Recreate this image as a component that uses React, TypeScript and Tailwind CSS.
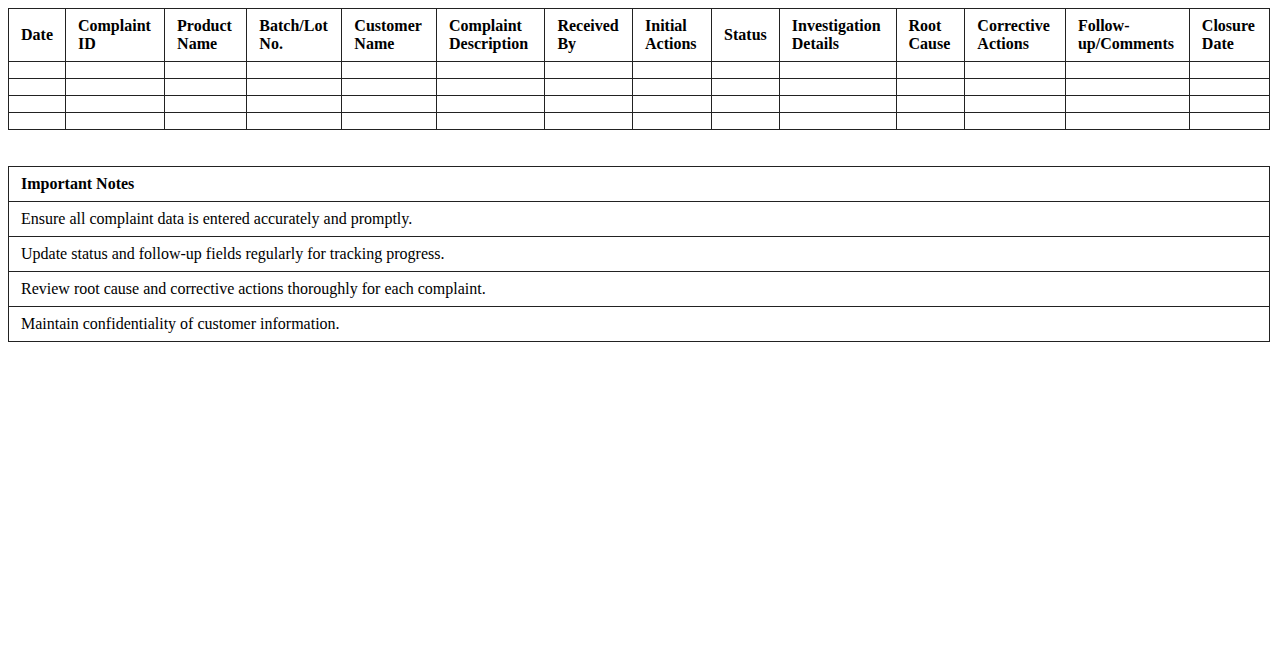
const headers = [
  "Date",
  "Complaint ID",
  "Product Name",
  "Batch/Lot No.",
  "Customer Name",
  "Complaint Description",
  "Received By",
  "Initial Actions",
  "Status",
  "Investigation Details",
  "Root Cause",
  "Corrective Actions",
  "Follow-up/Comments",
  "Closure Date",
];

const notes = [
  "Ensure all complaint data is entered accurately and promptly.",
  "Update status and follow-up fields regularly for tracking progress.",
  "Review root cause and corrective actions thoroughly for each complaint.",
  "Maintain confidentiality of customer information.",
];

export default function App() {
  return (
    <div className="bg-white p-2 text-base text-black font-['Liberation_Serif',serif]">
      <table className="w-full border-collapse">
        <thead>
          <tr>
            {headers.map((h) => (
              <th
                key={h}
                className="border border-[#222] px-3 py-2 text-left align-middle font-bold leading-[18px]"
              >
                {h}
              </th>
            ))}
          </tr>
        </thead>
        <tbody>
          {[0, 1, 2, 3].map((r) => (
            <tr key={r}>
              {headers.map((h) => (
                <td key={h} className="border border-[#222] px-3 py-2"></td>
              ))}
            </tr>
          ))}
        </tbody>
      </table>

      <table className="mt-9 w-full border-collapse">
        <thead>
          <tr>
            <th className="border border-[#222] px-3 py-2 text-left font-bold leading-[18px]">
              Important Notes
            </th>
          </tr>
        </thead>
        <tbody>
          {notes.map((n) => (
            <tr key={n}>
              <td className="border border-[#222] px-3 py-2 leading-[18px]">{n}</td>
            </tr>
          ))}
        </tbody>
      </table>
    </div>
  );
}
